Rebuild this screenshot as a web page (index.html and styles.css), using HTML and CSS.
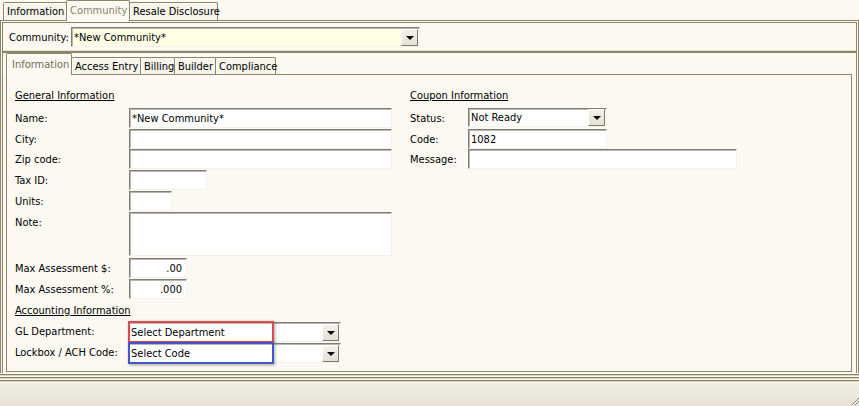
FILE: index.html
```html
<!DOCTYPE html>
<html>
<head>
<meta charset="utf-8">
<link rel="stylesheet" href="styles.css">
</head>
<body>
<div class="toptabs">
  <div class="tab w-info">Information</div>
  <div class="tab active w-comm">Community</div>
  <div class="tab w-resale">Resale Disclosure</div>
</div>
<div class="frame">
  <div class="comm-row">
    <span class="comm-label">Community:</span>
    <div class="combo combo-yellow"><span class="combo-text">*New Community*</span><span class="drop"><span class="arrow"></span></span></div>
  </div>
  <div class="subtabs">
    <div class="stab active s-info">Information</div>
    <div class="stab s-access">Access Entry</div>
    <div class="stab s-billing">Billing</div>
    <div class="stab s-builder">Builder</div>
    <div class="stab s-comp">Compliance</div>
  </div>
  <div class="panel">
    <div class="col-left">
      <div class="header">General Information</div>
      <div class="lbl">Name:</div><div class="input w-long">*New Community*</div>
      <div class="lbl">City:</div><div class="input w-long"></div>
      <div class="lbl">Zip code:</div><div class="input w-long"></div>
      <div class="lbl">Tax ID:</div><div class="input w-tax"></div>
      <div class="lbl">Units:</div><div class="input w-units"></div>
      <div class="lbl">Note:</div><div class="input w-long note"></div>
      <div class="lbl">Max Assessment $:</div><div class="input w-max num">.00</div>
      <div class="lbl">Max Assessment %:</div><div class="input w-max num">.000</div>
      <div class="header">Accounting Information</div>
      <div class="lbl">GL Department:</div>
      <div class="combo w-acct"><span class="combo-text">Select Department</span><span class="drop"><span class="arrow"></span></span><span class="hl hl-red"></span></div>
      <div class="lbl">Lockbox / ACH Code:</div>
      <div class="combo w-acct"><span class="combo-text">Select Code</span><span class="drop"><span class="arrow"></span></span><span class="hl hl-blue"></span></div>
    </div>
    <div class="col-right">
      <div class="header">Coupon Information</div>
      <div class="lbl">Status:</div>
      <div class="combo w-status"><span class="combo-text">Not Ready</span><span class="drop"><span class="arrow"></span></span></div>
      <div class="lbl">Code:</div><div class="input w-code">1082</div>
      <div class="lbl">Message:</div><div class="input w-msg"></div>
    </div>
  </div>
</div>
<div class="stripes"></div>
<div class="status">
  <svg class="grip" width="8" height="8" viewBox="0 0 8 8">
    <path d="M8 1 L1 8" stroke="#8c8669" stroke-width="1"/>
    <path d="M8 4 L4 8" stroke="#8c8669" stroke-width="1"/>
    <path d="M8 2 L2 8" stroke="#ffffff" stroke-width="1"/>
  </svg>
</div>
</body>
</html>
```
FILE: styles.css
```css
* { box-sizing: border-box; }
html, body { margin: 0; padding: 0; }
body {
  width: 859px;
  height: 406px;
  overflow: hidden;
  background: #fbf9f2;
  font-family: "DejaVu Sans Condensed", "Liberation Sans", Tahoma, sans-serif;
  font-size: 11px;
  color: #000;
}

/* top tabs */
.toptabs {
  display: flex;
  align-items: flex-end;
  height: 20px;
  padding-left: 3px;
}
.tab {
  position: relative;
  height: 18px;
  padding: 0 0 0 3px;
  line-height: 18px;
  border: 1px solid #8c8669;
  border-bottom: none;
  border-radius: 2px 2px 0 0;
  background: #f6f4eb;
  box-shadow: inset 1px 1px 0 #ffffff;
  white-space: nowrap;
}
.tab + .tab { margin-left: -1px; }
.tab.active {
  height: 21px;
  margin-bottom: -1px;
  line-height: 20px;
  background: #fbf9f2;
  color: #878371;
  z-index: 2;
}
.w-info { width: 64px; }
.w-comm { width: 64px; }
.w-resale { width: 89px; }

/* outer frame */
.frame {
  display: flex;
  flex-direction: column;
  height: 353px;
  border-style: double;
  border-color: #8c8669;
  border-width: 3px 3px 0 3px;
}
.comm-row {
  display: flex;
  align-items: flex-start;
  height: 30px;
  padding: 4px 0 0 6px;
  border-bottom: 2px solid #8c8669;
  box-shadow: 0 -1px 0 #e6e2d2 inset;
}
.comm-label {
  width: 62px;
  line-height: 21px;
}

/* combos */
.combo {
  position: relative;
  display: flex;
  align-items: center;
  height: 20px;
  background: #ffffff;
  border: 1px solid;
  border-color: #7e7d77 #f4f2ea #f4f2ea #7e7d77;
  box-shadow: inset 1px 1px 0 #b9b7ad;
}
.combo-yellow {
  width: 349px;
  background: #ffffe6;
}
.combo-text {
  flex: 1;
  padding: 1px 0 0 2px;
  line-height: 18px;
  white-space: nowrap;
}
.drop {
  display: flex;
  align-items: center;
  justify-content: center;
  width: 17px;
  height: 17px;
  margin-right: 1px;
  background: linear-gradient(#f3f1ea, #e3e0d3);
  border: 1px solid;
  border-color: #ffffff #7c7a70 #7c7a70 #ffffff;
}
.arrow {
  width: 0;
  height: 0;
  border-left: 4px solid transparent;
  border-right: 4px solid transparent;
  border-top: 4px solid #000;
  margin-top: 1px;
}

/* sub tabs */
.subtabs {
  display: flex;
  align-items: flex-end;
  height: 21px;
  padding-left: 3px;
}
.stab {
  position: relative;
  height: 17px;
  padding-left: 3px;
  line-height: 17px;
  border: 1px solid #8c8669;
  border-bottom: none;
  border-radius: 2px 2px 0 0;
  background: #f6f4eb;
  box-shadow: inset 1px 1px 0 #ffffff;
  white-space: nowrap;
}
.stab + .stab { margin-left: -1px; }
.stab.active {
  height: 22px;
  margin-bottom: -1px;
  padding-left: 5px;
  line-height: 22px;
  background: #fbf9f2;
  color: #6f6b58;
  z-index: 2;
}
.s-info { width: 66px; }
.s-access { width: 70px; }
.s-billing { width: 35px; }
.s-builder { width: 42px; }
.s-comp { width: 61px; }

/* panel */
.panel {
  flex: 1;
  display: flex;
  align-items: flex-start;
  margin: 0 4px 1px 3px;
  padding: 10px 0 0 8px;
  border: 1px solid #8c8669;
  gap: 18px;
}
.col-left {
  display: grid;
  grid-template-columns: 114px auto;
  grid-template-rows: 23px 21px 20px 21px 21px 21px 46px 21px 21px 21px 21px 21px;
  align-items: start;
  justify-items: start;
}
.col-right {
  display: grid;
  grid-template-columns: 58px auto;
  grid-template-rows: 23px 21px 20px 21px;
  align-items: start;
  justify-items: start;
}
.header {
  grid-column: 1 / 3;
  padding-top: 1px;
  line-height: 20px;
  text-decoration: underline;
}
.lbl {
  padding-top: 1px;
  line-height: 20px;
  white-space: nowrap;
}
.input {
  height: 20px;
  padding: 1px 0 0 2px;
  line-height: 18px;
  background: #ffffff;
  border: 1px solid;
  border-color: #7e7d77 #f4f2ea #f4f2ea #7e7d77;
  box-shadow: inset 1px 1px 0 #b9b7ad;
  white-space: nowrap;
}
.input.num { text-align: right; padding-right: 4px; }
.w-long { width: 263px; }
.w-tax { width: 78px; }
.w-units { width: 43px; }
.note { height: 44px; }
.w-max { width: 58px; }
.w-acct { width: 213px; margin-left: -1px; margin-top: 1px; }
.w-status { width: 139px; height: 19px; }
.w-code { width: 139px; }
.w-msg { width: 269px; }

.hl {
  position: absolute;
  left: -1px;
  top: -2px;
  width: 146px;
  height: 22px;
  border: 2px solid;
  box-shadow: 1px 1px 3px rgba(0, 0, 0, 0.35);
}
.hl-red { border-color: #d94b4e; }
.hl-blue { border-color: #4355c9; }

/* bottom */
.stripes {
  height: 10px;
  background: repeating-linear-gradient(to bottom,
    #fbf9f2 0, #fbf9f2 1px,
    #8c8669 1px, #8c8669 2px,
    #d9d5c4 2px, #d9d5c4 3px);
}
.status {
  display: flex;
  justify-content: flex-end;
  align-items: flex-end;
  height: 23px;
  background: linear-gradient(#efede4, #e6e3d6);
}
.grip { display: block; margin: 0 0 1px 0; }
```
